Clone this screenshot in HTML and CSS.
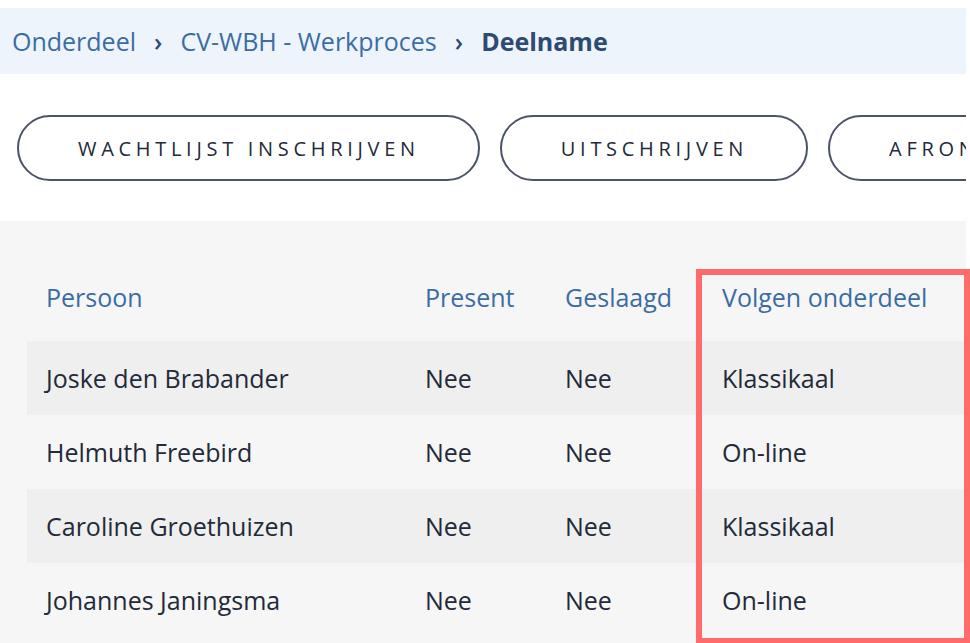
FILE: index.html
```html
<!DOCTYPE html>
<html lang="nl">
<head>
    <meta charset="UTF-8">
    <meta name="viewport" content="width=device-width, initial-scale=1.0">
    <title>Deelname</title>
    <link rel="stylesheet" href="styles.css">
</head>
<body>
    <nav class="breadcrumb">
        <a href="#">Onderdeel</a>
        <span class="sep">&#8250;</span>
        <a href="#">CV-WBH - Werkproces</a>
        <span class="sep">&#8250;</span>
        <span class="current">Deelname</span>
    </nav>

    <div class="actions">
        <button class="pill">Wachtlijst inschrijven</button>
        <button class="pill">Uitschrijven</button>
        <button class="pill">Afronden</button>
    </div>

    <section class="panel">
        <table class="grid">
            <thead>
                <tr>
                    <th class="col-name">Persoon</th>
                    <th class="col-present">Present</th>
                    <th class="col-passed">Geslaagd</th>
                    <th>Volgen onderdeel</th>
                </tr>
            </thead>
            <tbody>
                <tr>
                    <td>Joske den Brabander</td>
                    <td>Nee</td>
                    <td>Nee</td>
                    <td>Klassikaal</td>
                </tr>
                <tr>
                    <td>Helmuth Freebird</td>
                    <td>Nee</td>
                    <td>Nee</td>
                    <td>On-line</td>
                </tr>
                <tr>
                    <td>Caroline Groethuizen</td>
                    <td>Nee</td>
                    <td>Nee</td>
                    <td>Klassikaal</td>
                </tr>
                <tr>
                    <td>Johannes Janingsma</td>
                    <td>Nee</td>
                    <td>Nee</td>
                    <td>On-line</td>
                </tr>
            </tbody>
        </table>
        <div class="highlight"></div>
    </section>
</body>
</html>
```

FILE: styles.css
```css
body {
    margin: 0;
    padding: 8px 4px 0 0;
    font-family: 'Open Sans', sans-serif;
    background: #ffffff;
    color: #232a39;
    overflow: hidden;
    height: 643px;
    box-sizing: border-box;
}

.breadcrumb {
    height: 66px;
    display: flex;
    align-items: center;
    gap: 18px;
    padding-left: 12px;
    background: #eef4fb;
    font-size: 25px;
    white-space: nowrap;
}

.breadcrumb a {
    color: #3b6da3;
    text-decoration: none;
}

.breadcrumb .sep {
    color: #2d4b70;
    font-size: 25px;
    font-weight: 600;
}

.breadcrumb .current {
    color: #2d4b70;
    font-weight: 700;
}

.actions {
    display: flex;
    gap: 20px;
    padding: 41px 0 40px 17px;
    overflow: hidden;
}

.pill {
    flex: none;
    height: 66px;
    padding: 0 58px 0 59px;
    border: 2.5px solid #4b5466;
    border-radius: 33px;
    background: #ffffff;
    font-family: 'Open Sans', sans-serif;
    font-size: 20px;
    letter-spacing: 4.7px;
    text-transform: uppercase;
    color: #232a39;
    white-space: nowrap;
}

.panel {
    position: relative;
    background: #f6f6f6;
    height: 423px;
    padding: 46px 0 0 27px;
    box-sizing: border-box;
}

.grid {
    border-collapse: collapse;
    width: 940px;
    font-size: 25px;
}

.grid th {
    text-align: left;
    font-weight: 400;
    color: #3b6da3;
    height: 60px;
    padding: 0 0 14px 19px;
}

.grid td {
    height: 74px;
    padding: 0 0 0 19px;
}

.grid tbody tr:nth-child(odd) {
    background: #efefef;
}

.col-name {
    width: 360px;
}

.col-present {
    width: 121px;
}

.col-passed {
    width: 138px;
}

.highlight {
    position: absolute;
    left: 696px;
    top: 48px;
    width: 274px;
    height: 375px;
    border: 6px solid #ff6b6b;
    box-sizing: border-box;
}
```
